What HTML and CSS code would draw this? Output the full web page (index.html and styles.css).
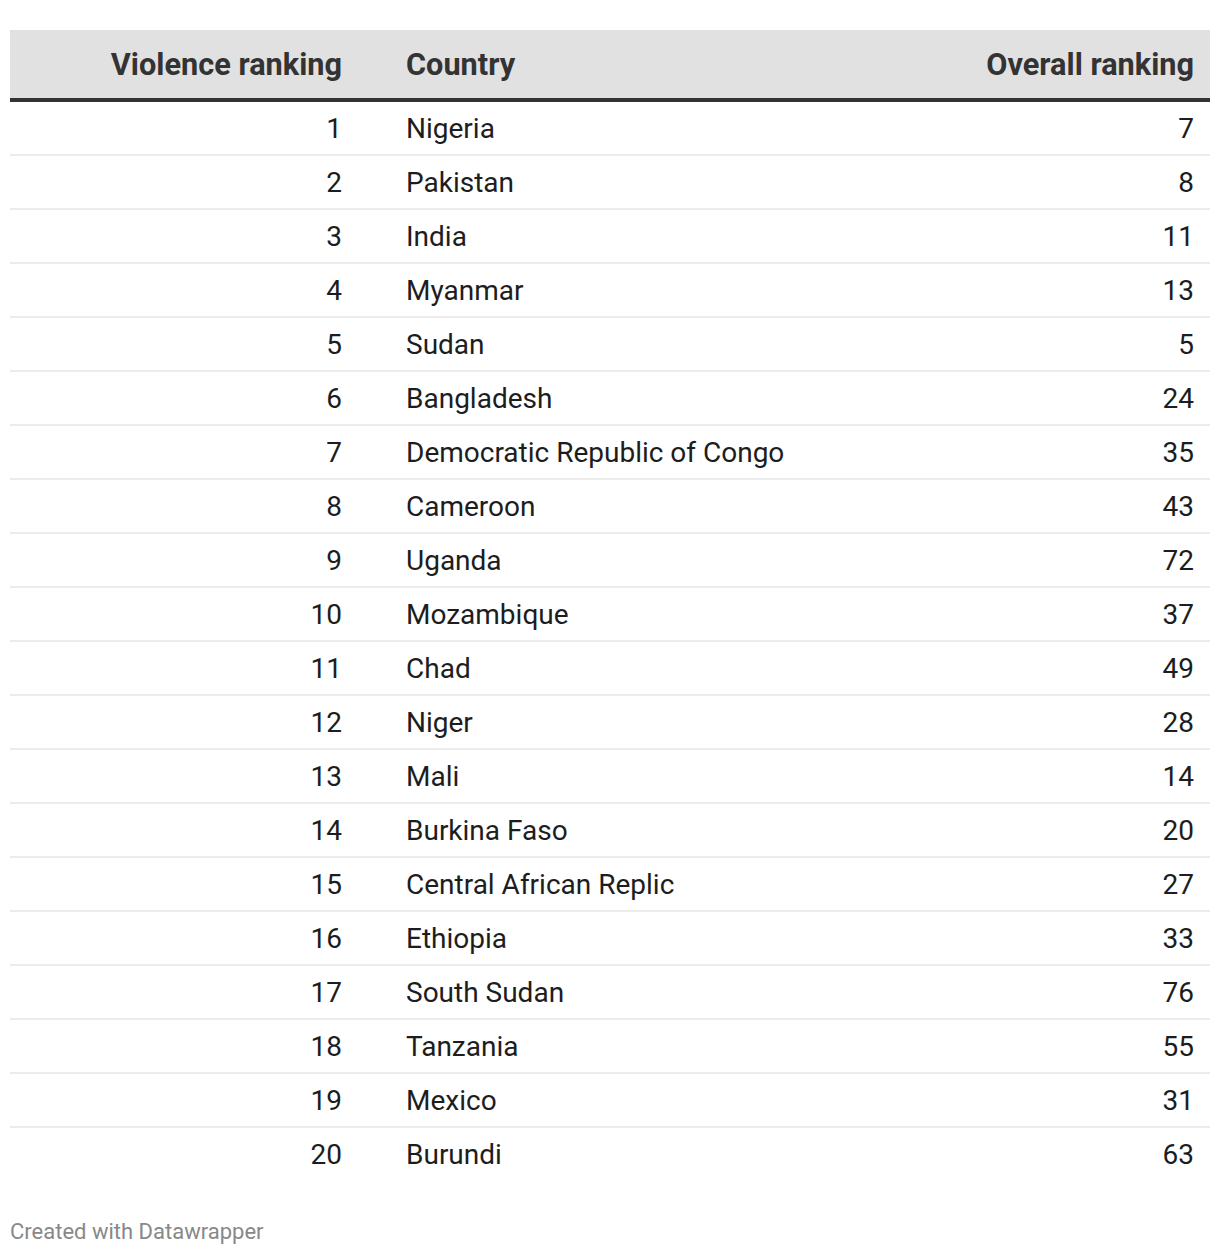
FILE: index.html
```html
<!DOCTYPE html>
<html>
<head>
<meta charset="utf-8">
<link rel="stylesheet" href="styles.css">
</head>
<body>
<div class="chart">
  <table class="tbl">
    <colgroup>
      <col class="w1">
      <col class="w2">
      <col class="w3">
    </colgroup>
    <thead>
      <tr>
        <th class="c1">Violence ranking</th>
        <th class="c2">Country</th>
        <th class="c3">Overall ranking</th>
      </tr>
    </thead>
    <tbody>
      <tr><td class="c1">1</td><td class="c2">Nigeria</td><td class="c3">7</td></tr>
      <tr><td class="c1">2</td><td class="c2">Pakistan</td><td class="c3">8</td></tr>
      <tr><td class="c1">3</td><td class="c2">India</td><td class="c3">11</td></tr>
      <tr><td class="c1">4</td><td class="c2">Myanmar</td><td class="c3">13</td></tr>
      <tr><td class="c1">5</td><td class="c2">Sudan</td><td class="c3">5</td></tr>
      <tr><td class="c1">6</td><td class="c2">Bangladesh</td><td class="c3">24</td></tr>
      <tr><td class="c1">7</td><td class="c2">Democratic Republic of Congo</td><td class="c3">35</td></tr>
      <tr><td class="c1">8</td><td class="c2">Cameroon</td><td class="c3">43</td></tr>
      <tr><td class="c1">9</td><td class="c2">Uganda</td><td class="c3">72</td></tr>
      <tr><td class="c1">10</td><td class="c2">Mozambique</td><td class="c3">37</td></tr>
      <tr><td class="c1">11</td><td class="c2">Chad</td><td class="c3">49</td></tr>
      <tr><td class="c1">12</td><td class="c2">Niger</td><td class="c3">28</td></tr>
      <tr><td class="c1">13</td><td class="c2">Mali</td><td class="c3">14</td></tr>
      <tr><td class="c1">14</td><td class="c2">Burkina Faso</td><td class="c3">20</td></tr>
      <tr><td class="c1">15</td><td class="c2">Central African Replic</td><td class="c3">27</td></tr>
      <tr><td class="c1">16</td><td class="c2">Ethiopia</td><td class="c3">33</td></tr>
      <tr><td class="c1">17</td><td class="c2">South Sudan</td><td class="c3">76</td></tr>
      <tr><td class="c1">18</td><td class="c2">Tanzania</td><td class="c3">55</td></tr>
      <tr><td class="c1">19</td><td class="c2">Mexico</td><td class="c3">31</td></tr>
      <tr class="last"><td class="c1">20</td><td class="c2">Burundi</td><td class="c3">63</td></tr>
    </tbody>
  </table>
  <div class="footer">Created with Datawrapper</div>
</div>
</body>
</html>
```

FILE: styles.css
```css
html, body {
  margin: 0;
  padding: 0;
  background: #ffffff;
}
body {
  font-family: Roboto, "Liberation Sans", sans-serif;
}
.chart {
  padding: 30px 10px 0 10px;
}
.tbl {
  width: 1200px;
  border-collapse: collapse;
  table-layout: fixed;
}
.w1 { width: 364px; }
.w3 { width: 300px; }
.tbl th {
  background: #e1e1e1;
  color: #333333;
  font-weight: 700;
  font-size: 30.7px;
  height: 68px;
  padding: 0 16px;
  border-bottom: 4px solid #333333;
  vertical-align: middle;
  white-space: nowrap;
}
.tbl td {
  color: #1d1d1d;
  font-size: 28px;
  height: 52px;
  padding: 0 16px;
  border-bottom: 2px solid #ececec;
  vertical-align: middle;
}
.tbl tr.last td {
  border-bottom: none;
}
.tbl .c1 {
  text-align: right;
  padding-right: 32px;
}
.tbl .c2 {
  text-align: left;
  padding-left: 32px;
}
.tbl .c3 {
  text-align: right;
}
.footer {
  margin-top: 39px;
  font-size: 22px;
  line-height: 26px;
  color: #888888;
}
```
